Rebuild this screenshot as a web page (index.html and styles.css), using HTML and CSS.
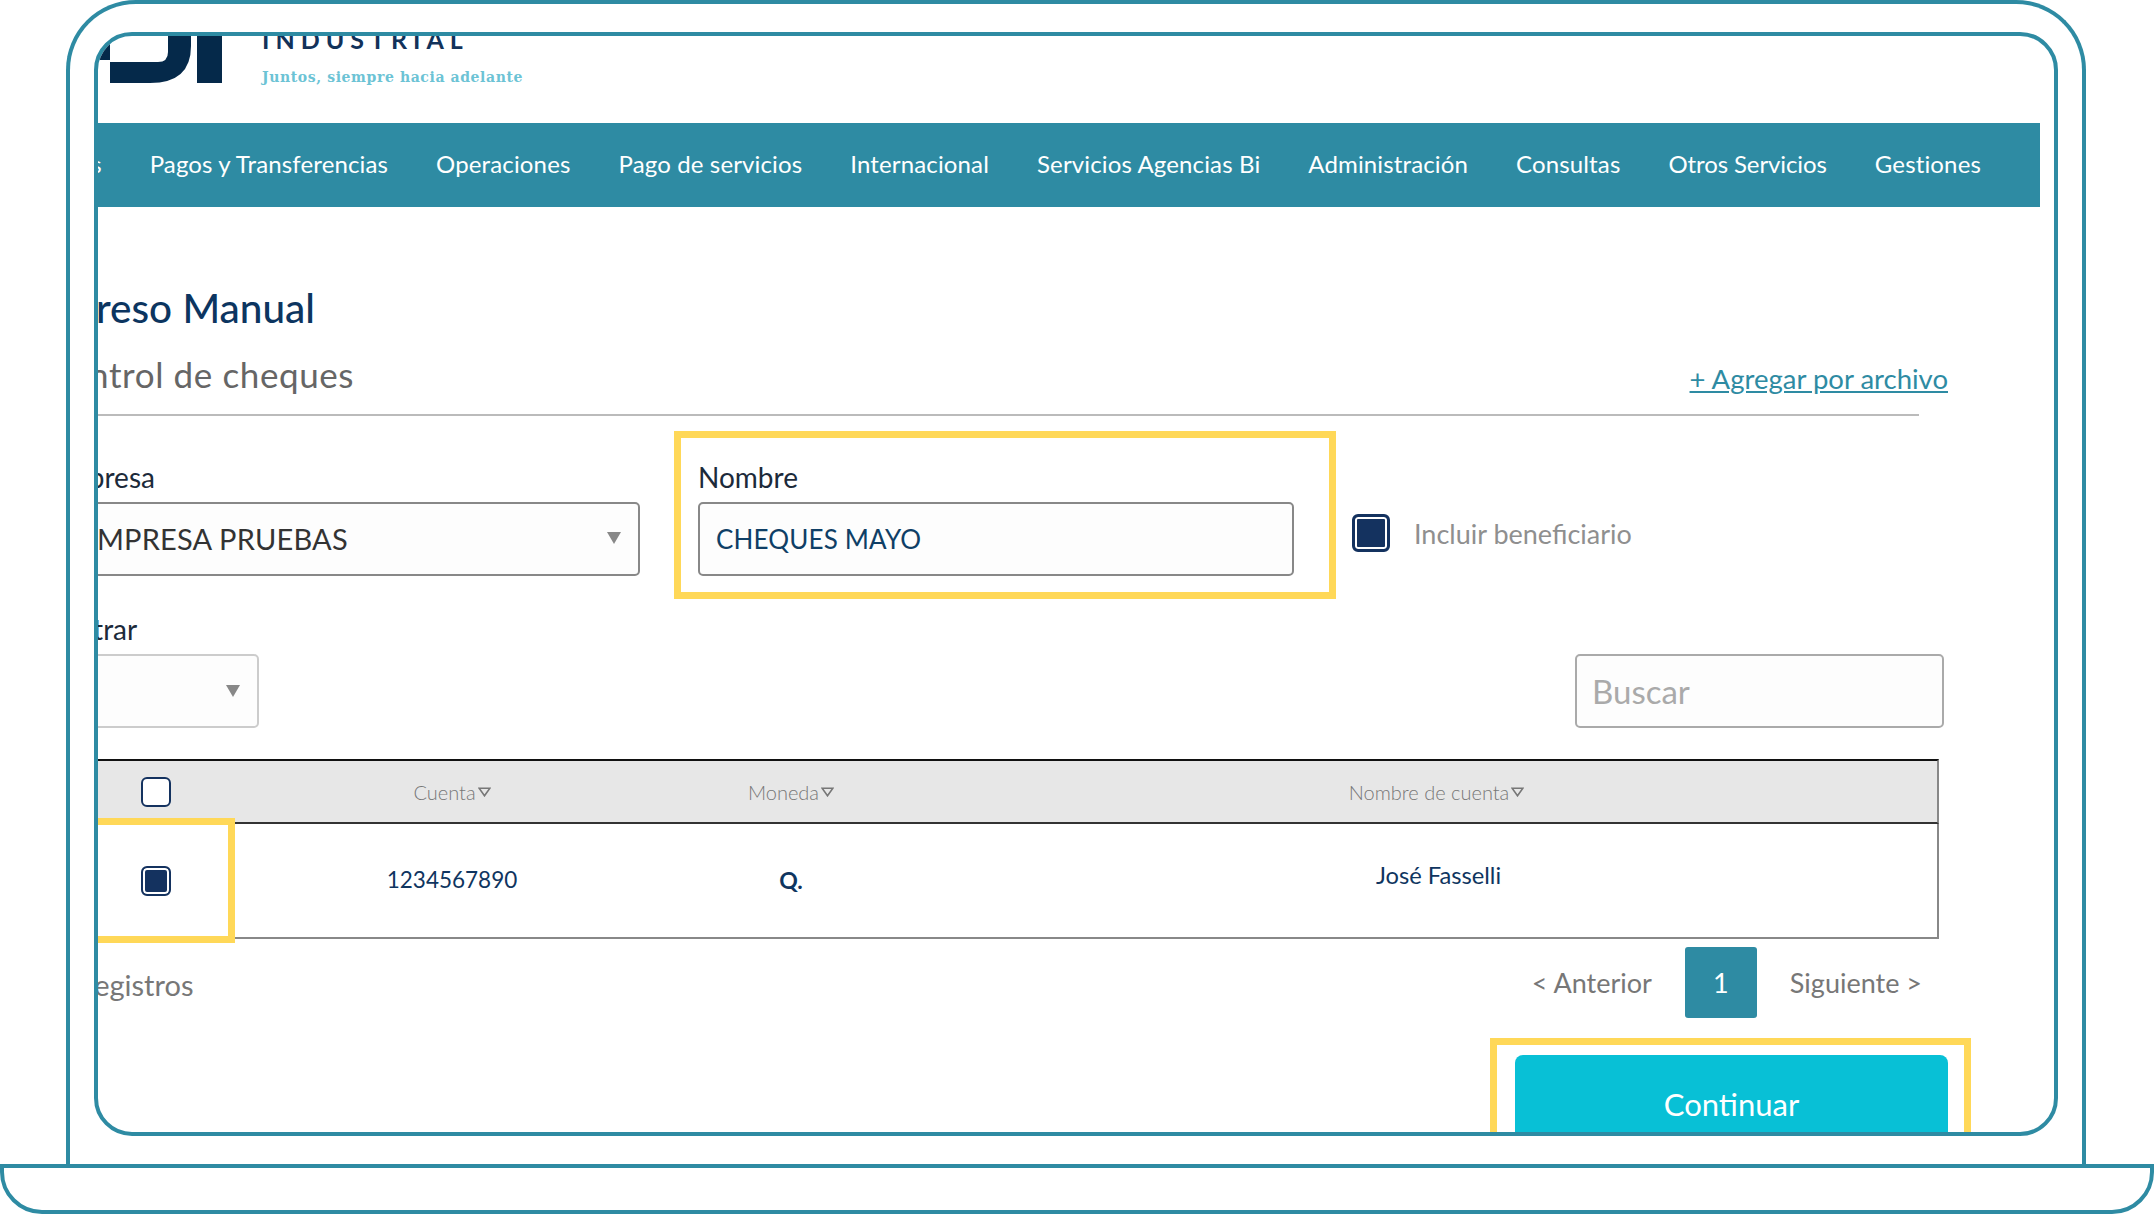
FILE: index.html
```html
<!DOCTYPE html>
<html lang="es">
<head>
	<meta charset="UTF-8">
	<title>Ingreso Manual</title>
	<link rel="stylesheet" href="styles.css">
</head>
<body>
	<div class="lid">
		<div class="screen">
			<div class="page">
				<header class="brand">
					<svg class="brand-mark" viewBox="0 0 175 49" width="175" height="49">
						<rect x="0" y="0" width="60" height="24" fill="#05294a"></rect>
						<path d="M60 26H108Q118 26 118 16V0H141V10Q141 47 100 47H60Z" fill="#05294a"></path>
						<rect x="147" y="0" width="25" height="47" fill="#05294a"></rect>
					</svg>
					<div class="brand-text">
						<div class="brand-name">INDUSTRIAL</div>
						<div class="brand-tag">Juntos, siempre hacia adelante</div>
					</div>
				</header>

				<nav class="menu">
					<a href="#">Cuentas</a>
					<a href="#">Pagos y Transferencias</a>
					<a href="#">Operaciones</a>
					<a href="#">Pago de servicios</a>
					<a href="#">Internacional</a>
					<a href="#">Servicios Agencias Bi</a>
					<a href="#">Administración</a>
					<a href="#">Consultas</a>
					<a href="#" class="menu-tight">Otros Servicios</a>
					<a href="#">Gestiones</a>
				</nav>

				<main class="content">
					<h1 class="title">Ingreso Manual</h1>
					<div class="subhead">
						<h2>Control de cheques</h2>
						<a href="#" class="file-link">+ Agregar por archivo</a>
					</div>
					<div class="rule"></div>

					<div class="form-row">
						<div class="field field-company">
							<label>Empresa</label>
							<div class="box select-box company-value">EMPRESA PRUEBAS<i class="arrow"></i></div>
						</div>
						<div class="field field-name">
							<label>Nombre</label>
							<div class="box name-value">CHEQUES MAYO</div>
							<div class="mark"></div>
						</div>
						<div class="include">
							<span class="check check-big"></span>
							<span>Incluir beneficiario</span>
						</div>
					</div>

					<div class="filter-row">
						<div class="field field-filter">
							<label>Filtrar</label>
							<div class="box box-light select-box"><i class="arrow"></i></div>
						</div>
						<div class="box box-light search">Buscar</div>
					</div>

					<div class="table">
						<div class="table-head">
							<div class="cell"><span class="check check-empty"></span></div>
							<div class="cell">Cuenta<svg class="sort" viewBox="0 0 12 9" width="13" height="10"><path d="M1 1H11L6 8Z" fill="none" stroke="#777" stroke-width="1.5"></path></svg></div>
							<div class="cell">Moneda<svg class="sort" viewBox="0 0 12 9" width="13" height="10"><path d="M1 1H11L6 8Z" fill="none" stroke="#777" stroke-width="1.5"></path></svg></div>
							<div class="cell cell-account">Nombre de cuenta<svg class="sort" viewBox="0 0 12 9" width="13" height="10"><path d="M1 1H11L6 8Z" fill="none" stroke="#777" stroke-width="1.5"></path></svg></div>
						</div>
						<div class="table-row">
							<div class="cell cell-check">
								<span class="check"></span>
								<div class="mark"></div>
							</div>
							<div class="cell cell-number">1234567890</div>
							<div class="cell cell-bold">Q.</div>
							<div class="cell cell-name">José Fasselli</div>
						</div>
					</div>

					<div class="table-foot">
						<div class="count">1 registros</div>
						<div class="pager">
							<span>&lt; Anterior</span>
							<a href="#" class="page-on">1</a>
							<span>Siguiente &gt;</span>
						</div>
					</div>

					<div class="actions">
						<div class="action">
							<a href="#" class="btn">Continuar</a>
							<div class="mark"></div>
						</div>
					</div>
				</main>
			</div>
		</div>
	</div>
	<div class="base"></div>
</body>
</html>
```

FILE: styles.css
```css
* {
	box-sizing: border-box;
}

html, body {
	margin: 0;
	height: 1214px;
	overflow: hidden;
	background: #fff;
	font-family: "Lato", "Noto Sans", sans-serif;
}

/* laptop frame */
.lid {
	width: 2020px;
	height: 1164px;
	margin-left: 66px;
	padding: 28px 24px 0;
	border: 4px solid #2e8ba3;
	border-bottom: 0;
	border-radius: 70px 70px 0 0;
}

.screen {
	height: 1104px;
	border: 4px solid #2e8ba3;
	border-radius: 38px;
	overflow: hidden;
}

.base {
	height: 50px;
	border: 4px solid #2e8ba3;
	border-radius: 0 0 42px 42px;
}

/* page inside the frame, its left side runs under the bezel */
.page {
	width: 1990px;
	margin-left: -48px;
}

.brand {
	display: flex;
	gap: 37px;
	height: 87px;
}

.brand-mark {
	display: block;
}

.brand-name {
	margin-top: -9px;
	font-size: 25px;
	font-weight: 700;
	line-height: 24px;
	letter-spacing: 6px;
	color: #12325a;
}

.brand-tag {
	margin-top: 16px;
	font-family: "DejaVu Serif", serif;
	font-size: 14px;
	font-weight: 700;
	line-height: 20px;
	letter-spacing: 0.6px;
	color: #6cc3d5;
}

.menu {
	display: flex;
	justify-content: flex-end;
	align-items: center;
	gap: 48px;
	height: 84px;
	padding-right: 59px;
	padding-bottom: 3px;
	background: #2e8ba3;
	white-space: nowrap;
}

.menu a {
	color: #fff;
	font-size: 24px;
	letter-spacing: 0.14px;
	text-decoration: none;
}

.menu .menu-tight {
	letter-spacing: -0.1px;
}

.content {
	padding-top: 77px;
}

.title {
	margin: 0 0 1px -9px;
	font-size: 40.5px;
	font-weight: 500;
	line-height: 48px;
	color: #0c3560;
}

.subhead {
	display: flex;
	justify-content: space-between;
	width: 1898px;
	height: 59px;
	margin-top: 22px;
}

.subhead h2 {
	margin: 0 0 0 -5px;
	font-size: 35px;
	font-weight: 400;
	line-height: 40px;
	letter-spacing: 0.6px;
	color: #666;
}

.file-link {
	margin-top: 5px;
	font-size: 27.5px;
	line-height: 40px;
	color: #2e8ba3;
}

.rule {
	width: 1869px;
	height: 2px;
	margin-top: 1px;
	background: #bbb;
}

.form-row {
	display: flex;
	gap: 58px;
	margin-top: 47px;
}

.field {
	position: relative;
}

.field label {
	display: block;
	height: 30px;
	margin-bottom: 9px;
	font-size: 28px;
	line-height: 28px;
	color: #1c2a3a;
}

.field-company {
	width: 590px;
}

.field-name {
	width: 596px;
}

.field-filter {
	width: 209px;
}

.field-filter label {
	padding-left: 14px;
}

.box {
	display: flex;
	align-items: center;
	height: 74px;
	padding: 0 17px;
	background: #fdfdfd;
	border: 2px solid #888;
	border-radius: 5px;
	font-size: 26px;
}

.box-light {
	border-color: #ccc;
}

.select-box {
	justify-content: space-between;
	padding-right: 17px;
}

.arrow {
	width: 0;
	height: 0;
	margin-left: auto;
	border-style: solid;
	border-width: 12px 7px 0;
	border-color: #888 transparent transparent;
}

.company-value {
	padding-left: 28px;
	padding-bottom: 2px;
	font-size: 29px;
	letter-spacing: 0.2px;
	color: #333;
}

.name-value {
	padding-left: 16px;
	letter-spacing: 0.15px;
	color: #0f3f66;
}

.include {
	display: flex;
	align-items: center;
	gap: 24px;
	height: 38px;
	margin-top: 51px;
	font-size: 27px;
	color: #8f8f8f;
}

.check {
	display: block;
	flex: none;
	width: 30px;
	height: 30px;
	background: #14325f;
	border: 2px solid #14325f;
	border-radius: 6px;
	box-shadow: inset 0 0 0 2px #fff;
}

.check-big {
	width: 38px;
	height: 38px;
	border-width: 3px;
}

.check-empty {
	background: #fff;
	box-shadow: none;
}

.filter-row {
	display: flex;
	justify-content: space-between;
	align-items: flex-end;
	width: 1894px;
	margin-top: 39px;
}

.search {
	width: 369px;
	padding-left: 15px;
	border-color: #aaa;
	font-size: 33px;
	color: #aaa;
}

.table {
	width: 1889px;
	margin-top: 31px;
}

.table-head, .table-row {
	display: grid;
	grid-template-columns: 212px 380px 298px 1fr;
	border-right: 2px solid #888;
}

.table-head {
	height: 65px;
	background: #e7e7e7;
	border-top: 2px solid #111;
	border-bottom: 2px solid #333;
	font-size: 20px;
	font-weight: 300;
	color: #777;
}

.table-row {
	height: 115px;
	border-bottom: 2px solid #888;
	font-size: 23px;
	color: #0f3560;
}

.cell {
	display: flex;
	justify-content: center;
	align-items: center;
}

.cell-check {
	position: relative;
}

.cell-account {
	padding-right: 4px;
}

.cell-number {
	padding-bottom: 3px;
	font-size: 22.5px;
}

.cell-bold {
	padding-bottom: 1px;
	font-weight: 700;
}

.cell-name {
	padding-bottom: 11px;
	font-size: 23.7px;
}

.sort {
	margin-left: 2px;
}

/* yellow frames from the tutorial, drawn over the form */
.mark {
	position: absolute;
	border: 7px solid #ffd858;
	pointer-events: none;
}

.field-name .mark {
	top: -32px;
	right: -42px;
	bottom: -23px;
	left: -24px;
}

.cell-check .mark {
	top: -6px;
	right: 27px;
	bottom: -6px;
	left: 0;
}

.table-foot {
	display: flex;
	justify-content: space-between;
	align-items: center;
	width: 1872px;
	height: 71px;
	margin-top: 8px;
	font-size: 27px;
	color: #777;
}

.count {
	margin-left: 10px;
	padding-top: 4px;
	font-size: 29px;
}

.pager {
	display: flex;
	align-items: center;
	gap: 33px;
}

.page-on {
	display: flex;
	justify-content: center;
	align-items: center;
	width: 72px;
	height: 71px;
	background: #2e8ba3;
	border-radius: 3px;
	color: #fff;
	text-decoration: none;
}

.actions {
	display: flex;
	justify-content: flex-end;
	width: 1898px;
	margin-top: 37px;
}

.action {
	position: relative;
	width: 433px;
}

.action .mark {
	top: -17px;
	right: -23px;
	bottom: -17px;
	left: -25px;
}

.btn {
	display: flex;
	justify-content: center;
	align-items: center;
	height: 98px;
	background: #08c0d6;
	border-radius: 8px;
	color: #fff;
	font-size: 31px;
	text-decoration: none;
}
```
